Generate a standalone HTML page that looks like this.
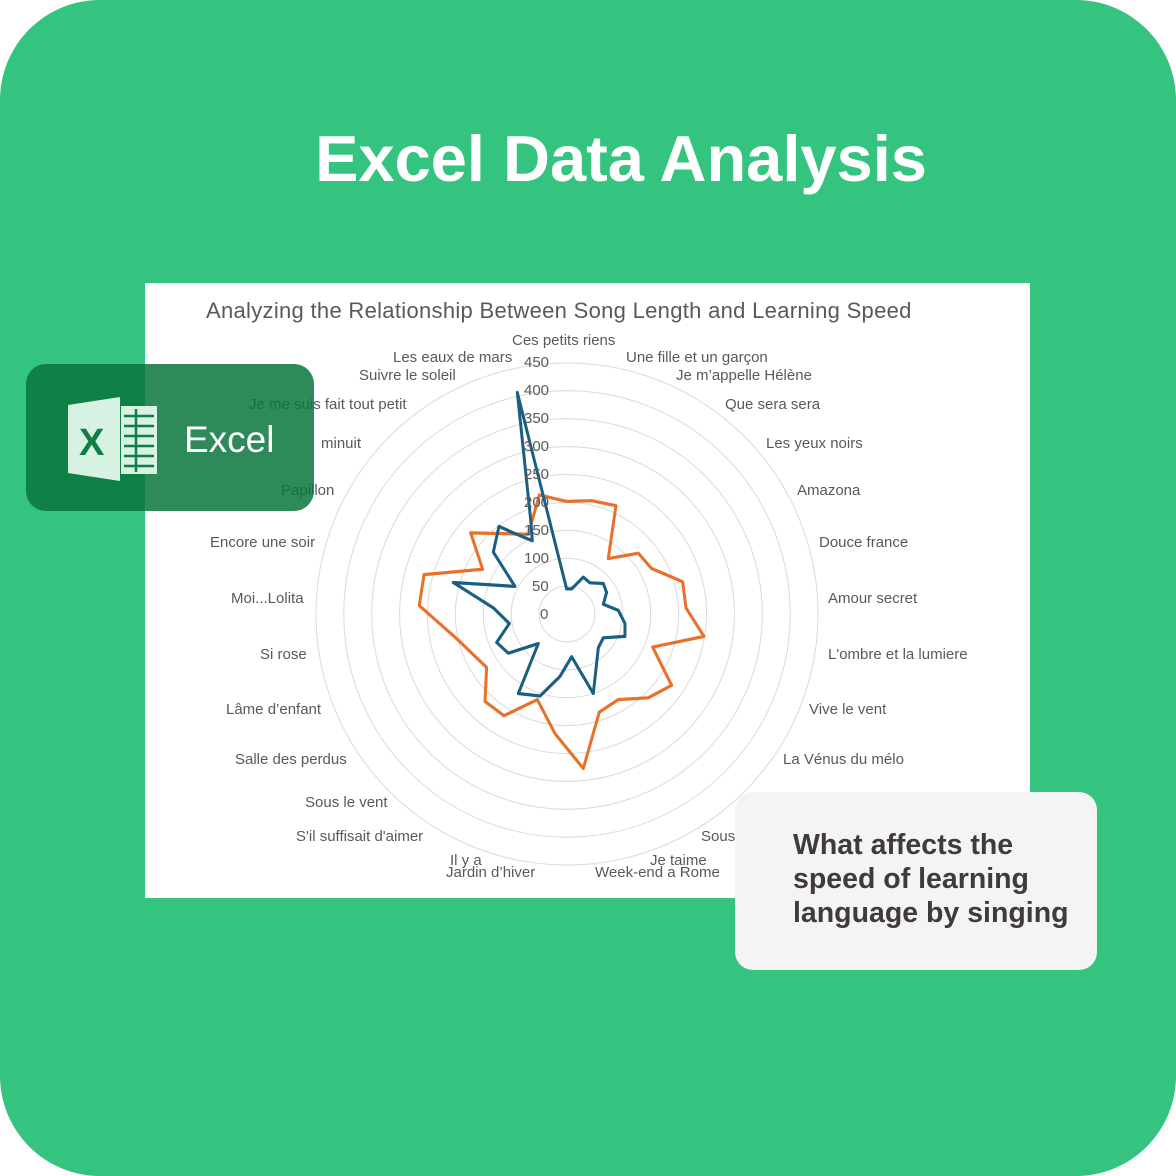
<!DOCTYPE html>
<html><head><meta charset="utf-8"><style>
body{margin:0;width:1176px;height:1176px;background:#fff;overflow:hidden;font-family:"Liberation Sans",sans-serif}
#bg{position:absolute;left:0;top:0;width:1176px;height:1176px;background:#34c47f;border-radius:100px}
h1{position:absolute;left:0;width:1242px;top:121px;margin:0;text-align:center;color:#fff;font-size:65px;font-weight:bold}
#chart{position:absolute;left:145px;top:283px;width:885px;height:615px;background:#fff}
.t{position:absolute;font-size:15px;color:#595959;white-space:nowrap;line-height:16px}
#title{position:absolute;left:206px;top:298px;font-size:22px;letter-spacing:0.3px;color:#595959;white-space:nowrap}
#badge{position:absolute;left:26px;top:364px;width:288px;height:147px;border-radius:20px;background:rgba(10,118,60,0.85)}
#card{position:absolute;left:735px;top:792px;width:362px;height:178px;border-radius:18px;background:#f4f4f4}
#card div{position:absolute;left:58px;top:36px;font-size:28.5px;font-weight:bold;color:#403a3a;line-height:34px}
</style></head><body>
<div id="bg"></div>
<h1>Excel Data Analysis</h1>
<div id="chart"></div>
<svg style="position:absolute;left:0;top:0" width="1176" height="1176">
<g fill="none" stroke="#dadada" stroke-width="1">
<circle cx="567" cy="614" r="27.9"/><circle cx="567" cy="614" r="55.8"/><circle cx="567" cy="614" r="83.7"/><circle cx="567" cy="614" r="111.6"/><circle cx="567" cy="614" r="139.5"/><circle cx="567" cy="614" r="167.4"/><circle cx="567" cy="614" r="195.3"/><circle cx="567" cy="614" r="223.2"/><circle cx="567" cy="614" r="251"/>
</g>
<g transform="translate(300,330) scale(0.3333,0.3571)" fill="none" stroke-width="9" stroke-linejoin="round">
<polygon stroke="#e8702a" points="718,462 800,480 875,478 948,492 925,640 1015,625 1055,668 1148,705 1158,778 1212,858 1058,888 1115,995 1045,1030 955,1035 898,1070 850,1228 765,1130 712,1035 612,1080 555,1040 560,945 465,860 358,772 372,685 548,670 512,568 685,572"/>
<polygon stroke="#1a5f82" points="652,175 800,725 815,725 850,692 870,708 910,710 920,735 910,768 955,785 975,822 975,858 910,862 895,890 880,1018 815,915 780,970 720,1025 655,1018 715,878 625,905 590,875 628,822 580,778 460,707 645,718 580,622 597,550 640,568 697,590 692,530"/>
</g>
</svg>
<div id="title">Analyzing the Relationship Between Song Length and Learning Speed</div>
<div class="t" style="left:524px;top:355px">450</div><div class="t" style="left:524px;top:383px">400</div><div class="t" style="left:524px;top:411px">350</div><div class="t" style="left:524px;top:439px">300</div><div class="t" style="left:524px;top:467px">250</div><div class="t" style="left:524px;top:495px">200</div><div class="t" style="left:524px;top:523px">150</div><div class="t" style="left:524px;top:551px">100</div><div class="t" style="left:532px;top:579px">50</div><div class="t" style="left:540px;top:607px">0</div>
<div class="t" style="left:512px;top:333px">Ces petits riens</div>
<div class="t" style="left:626px;top:350px">Une fille et un garçon</div>
<div class="t" style="left:676px;top:368px">Je m’appelle Hélène</div>
<div class="t" style="left:725px;top:397px">Que sera sera</div>
<div class="t" style="left:766px;top:436px">Les yeux noirs</div>
<div class="t" style="left:797px;top:483px">Amazona</div>
<div class="t" style="left:819px;top:535px">Douce france</div>
<div class="t" style="left:828px;top:591px">Amour secret</div>
<div class="t" style="left:828px;top:647px">L'ombre et la lumiere</div>
<div class="t" style="left:809px;top:702px">Vive le vent</div>
<div class="t" style="left:783px;top:752px">La Vénus du mélo</div>
<div class="t" style="left:701px;top:829px">Sous</div>
<div class="t" style="left:650px;top:853px">Je taime</div>
<div class="t" style="left:595px;top:865px">Week-end a Rome</div>
<div class="t" style="left:450px;top:853px">Il y a</div>
<div class="t" style="left:446px;top:865px">Jardin d’hiver</div>
<div class="t" style="left:296px;top:829px">S'il suffisait d'aimer</div>
<div class="t" style="left:305px;top:795px">Sous le vent</div>
<div class="t" style="left:235px;top:752px">Salle des perdus</div>
<div class="t" style="left:226px;top:702px">Lâme d’enfant</div>
<div class="t" style="left:260px;top:647px">Si rose</div>
<div class="t" style="left:231px;top:591px">Moi...Lolita</div>
<div class="t" style="left:210px;top:535px">Encore une soir</div>
<div class="t" style="left:281px;top:483px">Papillon</div>
<div class="t" style="left:321px;top:436px">minuit</div>
<div class="t" style="left:249px;top:397px">Je me suis fait tout petit</div>
<div class="t" style="left:359px;top:368px">Suivre le soleil</div>
<div class="t" style="left:393px;top:350px">Les eaux de mars</div>
<div id="badge"></div>
<svg style="position:absolute;left:26px;top:364px" width="288" height="147">
<polygon points="42,41 94,33 94,117 42,109" fill="#d7f2e3"/>
<rect x="95" y="42" width="36" height="68" fill="#d7f2e3"/>
<g stroke="#0f7d45" stroke-width="2.5"><line x1="98" y1="52" x2="128" y2="52"/><line x1="98" y1="62" x2="128" y2="62"/><line x1="98" y1="72" x2="128" y2="72"/><line x1="98" y1="82" x2="128" y2="82"/><line x1="98" y1="92" x2="128" y2="92"/><line x1="98" y1="102" x2="128" y2="102"/><line x1="110" y1="45" x2="110" y2="108"/></g>
<text x="53" y="91" font-family="Liberation Sans" font-weight="bold" font-size="38" fill="#0f7d45">X</text>
<text x="158" y="88" font-family="Liberation Sans" font-size="37" fill="#fff">Excel</text>
</svg>
<div id="card"><div>What affects the<br>speed of learning<br>language by singing</div></div>
</body></html>
